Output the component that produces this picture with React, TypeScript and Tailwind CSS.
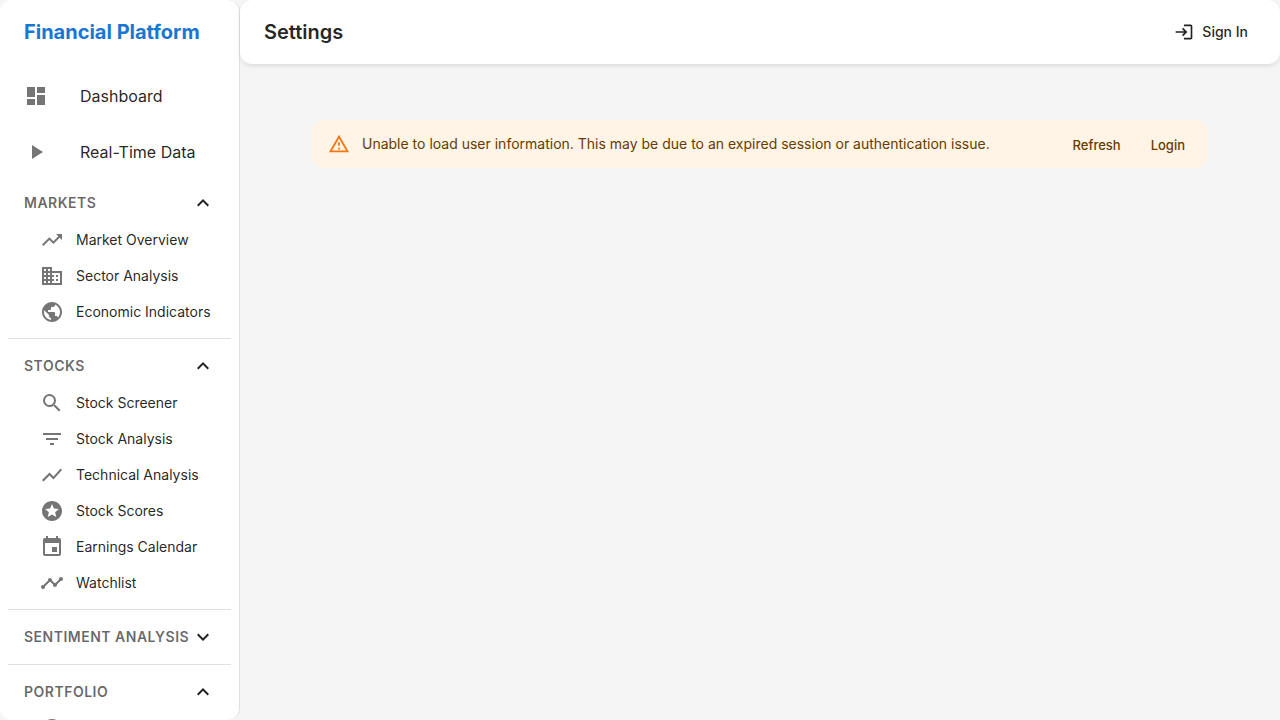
import { useState } from "react";
import type { IconType } from "react-icons";
import {
  MdAccountCircle,
  MdBusiness,
  MdDashboard,
  MdEvent,
  MdExpandLess,
  MdExpandMore,
  MdFilterList,
  MdLogin,
  MdOutlineReportProblem,
  MdPlayArrow,
  MdPublic,
  MdSearch,
  MdShowChart,
  MdStars,
  MdTimeline,
  MdTrendingUp,
} from "react-icons/md";

type Item = { label: string; icon: IconType };
type Section = { title: string; open: boolean; items: Item[] };

const topItems: Item[] = [
  { label: "Dashboard", icon: MdDashboard },
  { label: "Real-Time Data", icon: MdPlayArrow },
];

const sections: Section[] = [
  {
    title: "Markets",
    open: true,
    items: [
      { label: "Market Overview", icon: MdTrendingUp },
      { label: "Sector Analysis", icon: MdBusiness },
      { label: "Economic Indicators", icon: MdPublic },
    ],
  },
  {
    title: "Stocks",
    open: true,
    items: [
      { label: "Stock Screener", icon: MdSearch },
      { label: "Stock Analysis", icon: MdFilterList },
      { label: "Technical Analysis", icon: MdShowChart },
      { label: "Stock Scores", icon: MdStars },
      { label: "Earnings Calendar", icon: MdEvent },
      { label: "Watchlist", icon: MdTimeline },
    ],
  },
  { title: "Sentiment Analysis", open: false, items: [] },
  {
    title: "Portfolio",
    open: true,
    items: [{ label: "Portfolio", icon: MdAccountCircle }],
  },
];

function NavSection({ section }: { section: Section }) {
  const [open, setOpen] = useState(section.open);
  const Chevron = open ? MdExpandLess : MdExpandMore;
  return (
    <section className="border-t border-black/12 py-2 first:border-t-0 first:pt-0">
      <button
        type="button"
        aria-expanded={open}
        onClick={() => setOpen(!open)}
        className="flex h-[38px] w-full items-center justify-between px-4 text-left"
      >
        <span className="text-sm font-semibold tracking-[0.5px] whitespace-nowrap text-black/60 uppercase">
          {section.title}
        </span>
        <Chevron className="size-6 shrink-0" />
      </button>
      {open && (
        <ul>
          {section.items.map(({ label, icon: Icon }) => (
            <li key={label}>
              <a
                href="#"
                className="flex h-9 items-center gap-3 pl-8 text-sm leading-4 whitespace-nowrap"
              >
                <Icon className="size-6 shrink-0 text-black/54" />
                {label}
              </a>
            </li>
          ))}
        </ul>
      )}
    </section>
  );
}

export default function App() {
  return (
    <div className="flex h-screen bg-[#f5f5f5] font-['Inter',sans-serif] text-black/87">
      <aside className="flex w-60 shrink-0 flex-col overflow-hidden rounded-xl border-r border-black/12 bg-white">
        <div className="flex h-16 shrink-0 items-center px-6 text-xl font-bold whitespace-nowrap text-[#1976d2]">
          Financial Platform
        </div>
        <nav className="min-h-0 flex-1 overflow-y-auto p-2 [scrollbar-width:none]">
          <ul>
            {topItems.map(({ label, icon: Icon }) => (
              <li key={label} className="mb-2">
                <a href="#" className="flex h-12 items-center gap-8 px-4">
                  <Icon className="size-6 shrink-0 text-black/54" />
                  {label}
                </a>
              </li>
            ))}
          </ul>
          <div>
            {sections.map((section) => (
              <NavSection key={section.title} section={section} />
            ))}
          </div>
        </nav>
      </aside>
      <div className="flex min-w-0 flex-1 flex-col">
        <header className="flex h-16 shrink-0 items-center justify-between rounded-xl bg-white px-6 shadow-[0_2px_4px_rgba(0,0,0,0.1)]">
          <h1 className="text-xl font-semibold">Settings</h1>
          <button type="button" className="flex items-center gap-2 px-2 text-sm font-medium">
            <MdLogin className="size-5" />
            Sign In
          </button>
        </header>
        <main className="px-18 py-14">
          <div
            role="alert"
            className="flex min-h-12 items-center rounded-xl bg-[#fff4e5] px-4 text-sm text-[#663c00]"
          >
            <MdOutlineReportProblem className="mr-3 size-[22px] shrink-0 text-[#ed6c02] opacity-90" />
            <p className="flex-1">
              Unable to load user information. This may be due to an expired session or
              authentication issue.
            </p>
            <div className="flex gap-5 pt-0.5 pr-0.5 text-[13px] font-medium">
              <button type="button" className="px-[5px]">
                Refresh
              </button>
              <button type="button" className="px-[5px]">
                Login
              </button>
            </div>
          </div>
        </main>
      </div>
    </div>
  );
}
